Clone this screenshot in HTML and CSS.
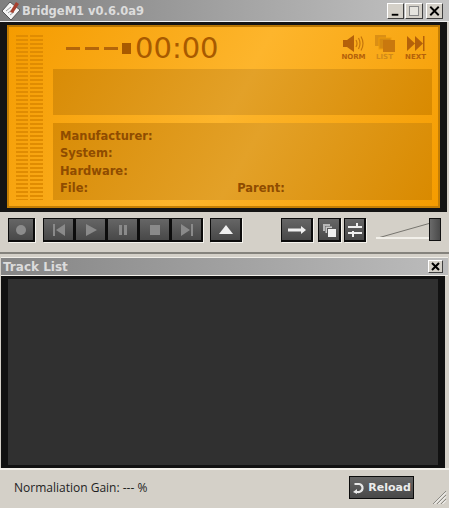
FILE: index.html
```html
<!DOCTYPE html>
<html lang="en">
<head>
    <meta charset="UTF-8">
    <title>BridgeM1</title>
    <link rel="stylesheet" href="styles.css">
</head>
<body>
    <div class="titlebar">
        <svg class="app-icon" width="22" height="21" viewBox="0 0 22 21">
            <path d="M2 11 L10 2 L20 10 L11 20 Z" fill="#f4f4f4" stroke="#555"/>
            <path d="M6 11 L11 7 M8 13 L13 9 M10 15 L14 12" stroke="#999"/>
            <path d="M10 12 L16 2 L19 4 L13 13 Z" fill="#a8402e"/>
        </svg>
        <div class="app-title">BridgeM1 v0.6.0a9</div>
        <div class="win-buttons">
            <div class="win-btn"><svg width="16" height="14" viewBox="0 0 16 14"><rect x="4" y="10" width="7" height="2" fill="#000"/></svg></div>
            <div class="win-btn win-max"><svg width="16" height="14" viewBox="0 0 16 14"><rect x="3.5" y="2.5" width="9" height="9" fill="#e6e4de" stroke="#888"/></svg></div>
            <div class="win-btn win-close"><svg width="16" height="14" viewBox="0 0 16 14"><path d="M3.5 2.5 L12.5 11.5 M12.5 2.5 L3.5 11.5" stroke="#000" stroke-width="2"/></svg></div>
        </div>
    </div>

    <div class="frame">
        <div class="display">
            <div class="meters">
                <div class="meter"></div>
                <div class="meter meter-wide"></div>
            </div>
            <div class="screen">
                <div class="status">
                    <div class="dash"></div>
                    <div class="dash"></div>
                    <div class="dash"></div>
                    <div class="stop-mark"></div>
                    <div class="time">00:00</div>
                    <div class="modes">
                        <div class="mode">
                            <svg width="22" height="17" viewBox="0 0 22 17">
                                <path d="M0 5 H4 L11 0 V17 L4 12 H0 Z" fill="#b4610a"/>
                                <path d="M13 5 Q15 8.5 13 12 M15.5 3 Q18.5 8.5 15.5 14 M18 1.5 Q22 8.5 18 15.5" fill="none" stroke="#c4750c" stroke-width="1.2"/>
                            </svg>
                            <span>NORM</span>
                        </div>
                        <div class="mode mode-off">
                            <svg width="20" height="17" viewBox="0 0 20 17">
                                <rect x="0" y="0" width="11" height="11" fill="#db8f14"/>
                                <rect x="4" y="3" width="12" height="11" fill="#d58a12" stroke="#f09c08"/>
                                <rect x="8" y="5" width="12" height="12" fill="#c9780e"/>
                            </svg>
                            <span>LIST</span>
                        </div>
                        <div class="mode">
                            <svg width="18" height="17" viewBox="0 0 18 17">
                                <path d="M0 1 L8 8.5 L0 16 Z M8 1 L16 8.5 L8 16 Z" fill="#b4610a"/>
                                <rect x="16" y="1" width="1.5" height="15" fill="#b4610a"/>
                            </svg>
                            <span>NEXT</span>
                        </div>
                    </div>
                </div>
                <div class="panel panel-title"></div>
                <div class="panel panel-info">
                    <div>Manufacturer:</div>
                    <div>System:</div>
                    <div>Hardware:</div>
                    <div class="info-last"><span>File:</span><span class="parent">Parent:</span></div>
                </div>
            </div>
        </div>
    </div>

    <div class="controls">
        <div class="btn btn-rec"><svg width="12" height="12" viewBox="0 0 12 12"><circle cx="6" cy="6" r="5" fill="#8c8c8c"/></svg></div>
        <div class="transport">
            <div class="btn"><svg width="14" height="14" viewBox="0 0 14 14"><path d="M1 1 H3 V13 H1 Z M13 1 V13 L4 7 Z" fill="#8a8a8a"/></svg></div>
            <div class="btn"><svg width="14" height="14" viewBox="0 0 14 14"><path d="M2 1 L13 7 L2 13 Z" fill="#8a8a8a"/></svg></div>
            <div class="btn"><svg width="12" height="12" viewBox="0 0 12 12"><path d="M2 1 H5 V11 H2 Z M7 1 H10 V11 H7 Z" fill="#8a8a8a"/></svg></div>
            <div class="btn"><svg width="12" height="12" viewBox="0 0 12 12"><rect x="1" y="1" width="10" height="10" fill="#8a8a8a"/></svg></div>
            <div class="btn"><svg width="14" height="14" viewBox="0 0 14 14"><path d="M1 1 L10 7 L1 13 Z M11 1 H13 V13 H11 Z" fill="#8a8a8a"/></svg></div>
        </div>
        <div class="btn btn-eject"><svg width="14" height="10" viewBox="0 0 14 10"><path d="M7 0 L14 9 H0 Z" fill="#f0f0f0"/></svg></div>
        <div class="btn btn-next"><svg width="18" height="10" viewBox="0 0 18 10"><path d="M0 3.5 H13 V1 L18 5 L13 9 V6.5 H0 Z" fill="#f0f0f0"/></svg></div>
        <div class="btn btn-small btn-list"><svg width="14" height="14" viewBox="0 0 14 14"><path d="M1 1 H8 V3 H3 V8 H1 Z" fill="#b8b8b8"/><path d="M3.5 3.5 H10 V5 H5 V10 H3.5 Z" fill="#c8c8c8"/><rect x="6" y="6" width="8" height="8" fill="#f0f0f0"/></svg></div>
        <div class="btn btn-small btn-eq"><svg width="14" height="14" viewBox="0 0 14 14"><path d="M0 3 H14 V5 H0 Z M0 9 H14 V11 H0 Z M8 0 H10 V4 H8 Z M4 8 H6 V14 H4 Z" fill="#f0f0f0"/></svg></div>
        <div class="volume">
            <svg width="54" height="18" viewBox="0 0 54 18">
                <path d="M0 16.5 L53 1.5" stroke="#77756f" fill="none"/>
                <rect x="0" y="15" width="54" height="2" fill="#f2f0ea"/>
            </svg>
            <div class="volume-thumb"></div>
        </div>
    </div>

    <div class="list-head">
        <div class="list-title">Track List</div>
        <div class="list-close"><svg width="9" height="9" viewBox="0 0 9 9"><path d="M1 1 L8 8 M8 1 L1 8" stroke="#000" stroke-width="2"/></svg></div>
    </div>

    <div class="list-frame">
        <div class="list-body"></div>
    </div>

    <div class="footer">
        <div class="gain">Normaliation Gain: --- %</div>
        <div class="reload">
            <svg width="13" height="13" viewBox="0 0 13 13"><path d="M2.5 3 H7 A4 4 0 1 1 6 11 H3" fill="none" stroke="#e8e8e8" stroke-width="2.2"/><path d="M5 8 L1 11 L5 13 Z" fill="#e8e8e8"/></svg>
            <span>Reload</span>
        </div>
        <svg class="grip" width="15" height="15" viewBox="0 0 15 15">
            <path d="M14 1 L1 14 M14 5 L5 14 M14 9 L9 14" stroke="#8c8a84" fill="none"/>
            <path d="M14 2.5 L2.5 14 M14 6.5 L6.5 14 M14 10.5 L10.5 14" stroke="#fff" fill="none"/>
        </svg>
    </div>
</body>
</html>
```

FILE: styles.css
```css
html, body {
    height: 100%;
}
body {
    margin: 0;
    width: 449px;
    height: 508px;
    overflow: hidden;
    display: flex;
    flex-direction: column;
    background-color: #d4d0c8;
    font-family: "DejaVu Sans", sans-serif;
}

/* window title */
.titlebar {
    height: 21px;
    flex: none;
    display: flex;
    align-items: center;
    background: linear-gradient(to right, #7f7f7f, #c4c4c4);
    border-bottom: 1px solid #f0f0f0;
}
.app-icon {
    flex: none;
}
.app-title {
    font-size: 11.5px;
    font-weight: bold;
    color: #dcdcdc;
    flex: 1;
}
.win-buttons {
    display: flex;
    gap: 1px;
    margin-right: 6px;
}
.win-btn {
    width: 17px;
    height: 16px;
    background-color: #d4d0c8;
    border: 1px solid;
    border-color: #fff #404040 #404040 #fff;
    box-sizing: border-box;
    display: flex;
    align-items: center;
    justify-content: center;
}
.win-max {
    width: 18px;
}
.win-close {
    margin-left: 2px;
}

/* orange lcd */
.frame {
    flex: none;
    margin-right: 2px;
    padding: 3px 7px 4px;
    background-color: #141414;
}
.display {
    height: 183px;
    box-sizing: border-box;
    display: flex;
    padding: 8px 6px 6px 7px;
    border: 2px solid #c47e04;
    border-top-color: #b87604;
    background: linear-gradient(120deg, #f59c00 0%, #fdb52c 50%, #f59c00 100%);
}
.meters {
    display: flex;
    gap: 2px;
    width: 27px;
    margin-right: 10px;
}
.meter {
    width: 12px;
    background: repeating-linear-gradient(to bottom, #e08c02 0, #e08c02 2px, transparent 2px, transparent 4px);
}
.meter-wide {
    width: 13px;
}
.screen {
    flex: 1;
    display: flex;
    flex-direction: column;
}
.status {
    height: 34px;
    flex: none;
    box-sizing: border-box;
    padding-bottom: 8px;
    display: flex;
    align-items: center;
    color: #a85a00;
}
.dash {
    width: 14px;
    height: 3px;
    margin: 0 5px 0 0;
    background-color: #b4660a;
}
.dash:first-child {
    margin-left: 13px;
}
.stop-mark {
    width: 9px;
    height: 11px;
    margin: 0 4px 0 -1px;
    background-color: #a85a00;
}
.time {
    font-size: 29px;
    line-height: 26px;
}
.modes {
    margin-left: auto;
    margin-right: 5px;
    display: flex;
    gap: 8px;
}
.mode {
    width: 23px;
    display: flex;
    flex-direction: column;
    align-items: center;
    font-size: 7px;
    font-weight: bold;
    line-height: 8px;
    color: #b4610a;
    white-space: nowrap;
}
.mode svg {
    margin-bottom: 1px;
}
.mode-off {
    color: #d18a1a;
}
.panel {
    background: linear-gradient(120deg, #d98c06 0%, #e3a128 50%, #d98a00 100%);
}
.panel-title {
    height: 46px;
    flex: none;
    margin-bottom: 8px;
}
.panel-info {
    height: 77px;
    flex: none;
    box-sizing: border-box;
    padding: 5px 7px 0;
    font-size: 11.5px;
    font-weight: bold;
    line-height: 17.3px;
    color: #8f4c00;
}
.info-last {
    display: flex;
}
.parent {
    margin-left: 149px;
}

/* player buttons */
.controls {
    height: 42px;
    flex: none;
    box-sizing: border-box;
    display: flex;
    align-items: flex-start;
    padding: 6px 9px 0 8px;
    border-bottom: 2px solid #85837d;
    background-color: #d4d0c8;
}
.btn {
    width: 32px;
    height: 24px;
    box-sizing: border-box;
    flex: none;
    display: flex;
    align-items: center;
    justify-content: center;
    border: 1px solid #0c0c0c;
    border-right-width: 2px;
    border-bottom-width: 2px;
    background: linear-gradient(to bottom, #666666, #484848);
    box-shadow: 1px 1px 0 #f4f2ec;
}
.btn-rec {
    width: 27px;
    margin-right: 8px;
}
.transport {
    display: flex;
    margin-right: 7px;
}
.btn-eject {
    margin-right: 39px;
}
.btn-next {
    margin-right: 5px;
}
.btn-small {
    width: 23px;
}
.btn-list {
    margin-right: 3px;
}
.btn-eq {
    width: 22px;
}
.volume {
    margin-left: 10px;
    display: flex;
    align-items: flex-start;
}
.volume svg {
    margin-top: 4px;
    margin-right: -1px;
}
.volume-thumb {
    width: 12px;
    height: 23px;
    box-sizing: border-box;
    border: 1px solid #111;
    background: linear-gradient(to right, #6a6a6a, #4a4a4a);
}

/* track list */
.list-head {
    height: 19px;
    flex: none;
    margin: 3px 1px 0;
    box-sizing: border-box;
    display: flex;
    align-items: center;
    justify-content: space-between;
    padding-right: 5px;
    background: linear-gradient(to right, #858585, #bcbcbc);
    border-top: 1px solid #f0eee8;
    border-bottom: 1px solid #f0eee8;
}
.list-title {
    font-size: 12px;
    font-weight: bold;
    color: #dcdcdc;
    padding-left: 2px;
}
.list-close {
    width: 15px;
    height: 13px;
    box-sizing: border-box;
    display: flex;
    align-items: center;
    justify-content: center;
    background-color: #d4d0c8;
    border: 1px solid;
    border-color: #fff #404040 #404040 #fff;
}
.list-frame {
    flex: none;
    height: 192px;
    margin: 0 4px 0 1px;
    box-sizing: border-box;
    padding: 3px 7px 3px 7px;
    background-color: #111;
}
.list-body {
    height: 100%;
    background-color: #303030;
}

/* bottom bar */
.footer {
    flex: 1;
    display: flex;
    align-items: center;
    border-top: 2px solid #f2f0ea;
    padding: 0 0 3px 14px;
    position: relative;
}
.gain {
    font-family: "Open Sans", sans-serif;
    font-size: 12px;
    color: #1e1e1e;
}
.reload {
    margin-left: auto;
    margin-right: 35px;
    width: 65px;
    height: 23px;
    box-sizing: border-box;
    display: flex;
    align-items: center;
    justify-content: center;
    gap: 3px;
    border: 1px solid #0c0c0c;
    background: linear-gradient(to bottom, #666666, #484848);
    color: #ececec;
    font-size: 11px;
    font-weight: bold;
}
.grip {
    position: absolute;
    right: 2px;
    bottom: 3px;
}
```
